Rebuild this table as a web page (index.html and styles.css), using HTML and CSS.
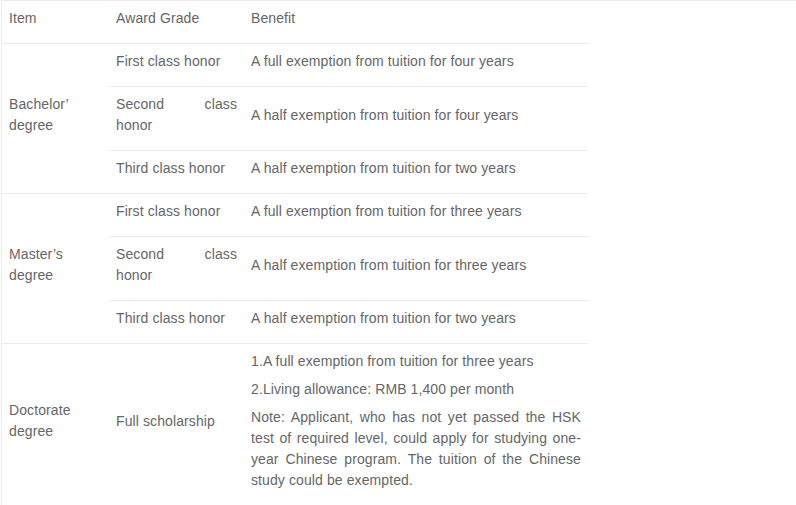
FILE: index.html
```html
<!DOCTYPE html>
<html>
<head>
<meta charset="utf-8">
<link rel="stylesheet" href="styles.css">
</head>
<body>
<div class="wrap">
<table class="grid">
  <colgroup>
    <col class="c1"><col class="c2"><col class="c3">
  </colgroup>
  <tr class="head">
    <td><p>Item</p></td>
    <td><p>Award Grade</p></td>
    <td><p>Benefit</p></td>
  </tr>
  <tr>
    <td rowspan="3"><p>Bachelor’ degree</p></td>
    <td><p>First class honor</p></td>
    <td><p>A full exemption from tuition for four years</p></td>
  </tr>
  <tr>
    <td><p>Second class honor</p></td>
    <td><p>A half exemption from tuition for four years</p></td>
  </tr>
  <tr>
    <td><p>Third class honor</p></td>
    <td><p>A half exemption from tuition for two years</p></td>
  </tr>
  <tr>
    <td rowspan="3"><p>Master’s degree</p></td>
    <td><p>First class honor</p></td>
    <td><p>A full exemption from tuition for three years</p></td>
  </tr>
  <tr>
    <td><p>Second class honor</p></td>
    <td><p>A half exemption from tuition for three years</p></td>
  </tr>
  <tr>
    <td><p>Third class honor</p></td>
    <td><p>A half exemption from tuition for two years</p></td>
  </tr>
  <tr>
    <td><p>Doctorate degree</p></td>
    <td><p>Full scholarship</p></td>
    <td class="multi">
      <p>1.A full exemption from tuition for three years</p>
      <p>2.Living allowance: RMB 1,400 per month</p>
      <p>Note: Applicant, who has not yet passed the HSK test of required level, could apply for studying one-year Chinese program. The tuition of the Chinese study could be exempted.</p>
    </td>
  </tr>
</table>
</div>
</body>
</html>
```

FILE: styles.css
```css
html, body {
  margin: 0;
  padding: 0;
  background: #fff;
}
.wrap {
  margin-left: 1px;
  border-top: 1px solid #ebebeb;
  border-left: 1px solid #ebebeb;
  min-height: 505px;
  box-sizing: border-box;
}
.grid {
  border-collapse: collapse;
  width: 586px;
  table-layout: fixed;
  font-family: "Liberation Sans", Arial, sans-serif;
  font-size: 14px;
  line-height: 21px;
  letter-spacing: 0.1px;
  color: #666;
  text-align: justify;
}
.c1 { width: 107px; }
.c2 { width: 135px; }
.c3 { width: 344px; }
.grid td {
  padding: 7px 7px;
  vertical-align: middle;
  border-top: 1px solid #ebebeb;
}
.grid .head td {
  border-top: 0;
}
.grid p {
  margin: 0 0 7px;
}
```
